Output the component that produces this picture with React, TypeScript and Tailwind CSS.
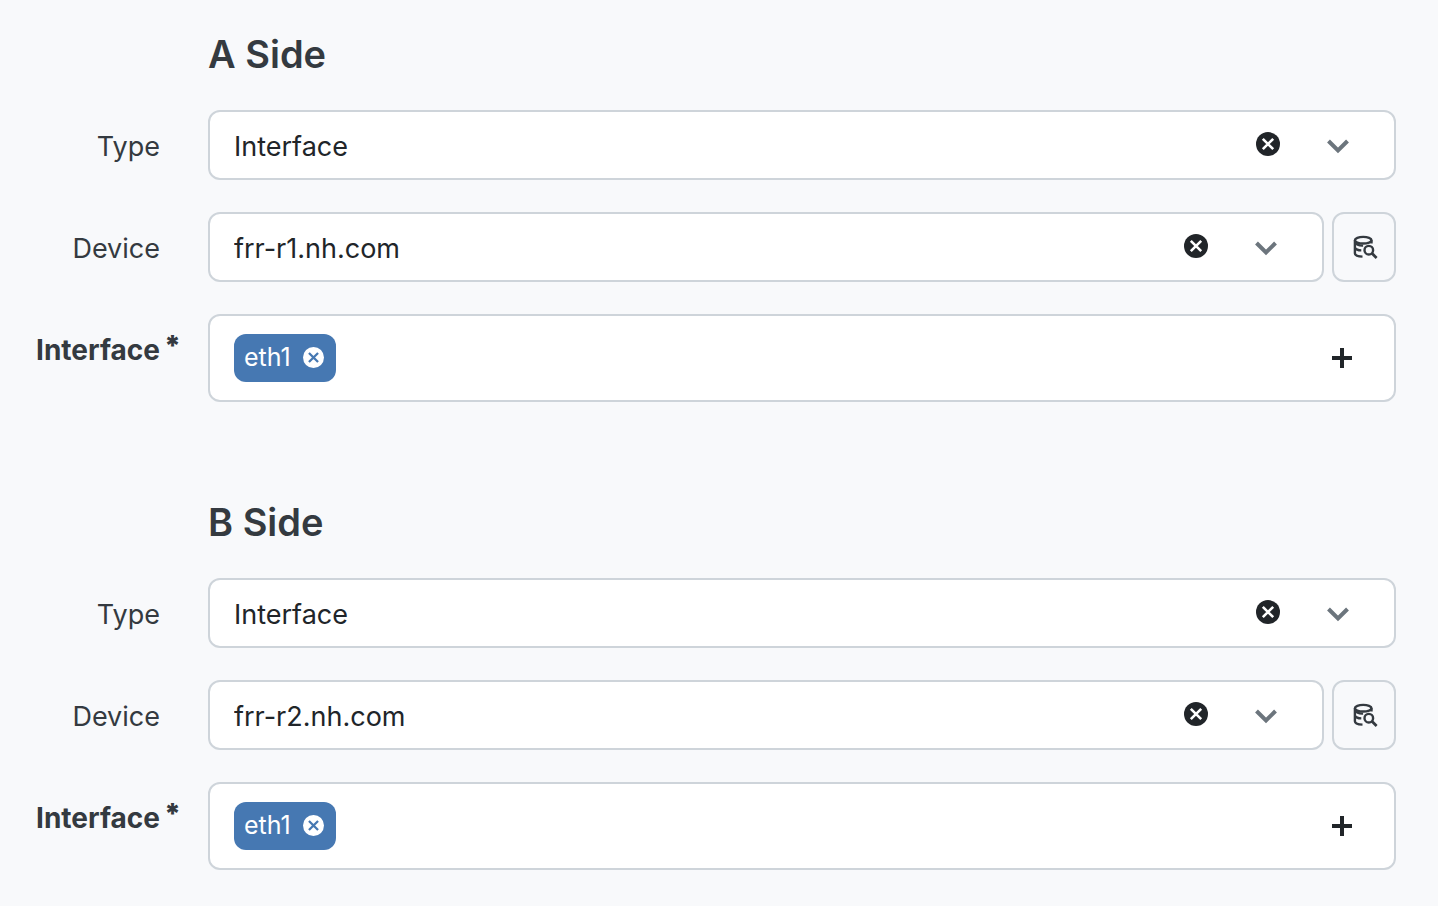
import React, { useState } from "react";

function ClearIcon({ className }: { className: string }) {
  return (
    <svg viewBox="0 0 24 24" className={className} aria-hidden="true">
      <circle cx="12" cy="12" r="12" fill="currentColor" />
      <path d="M6.800 6.800 17.200 17.200M17.200 6.800 6.800 17.200" fill="none" stroke="var(--cross)" strokeWidth="2.600" />
    </svg>
  );
}

function ChevronIcon() {
  return (
    <svg viewBox="0 0 24 24" className="size-6" aria-hidden="true">
      <path d="M2.500 8 12 17.500 21.500 8" fill="none" stroke="currentColor" strokeWidth="4" />
    </svg>
  );
}

function PlusIcon() {
  return (
    <svg viewBox="0 0 20 20" className="size-5" aria-hidden="true">
      <path d="M0 8h8V0h4v8h8v4h-8v8H8v-8H0z" fill="currentColor" />
    </svg>
  );
}

function DatabaseSearchIcon() {
  return (
    <svg viewBox="0 0 28 28" className="size-7" fill="none" stroke="currentColor" strokeWidth="2.400" aria-hidden="true">
      <ellipse cx="13.200" cy="7.200" rx="8.300" ry="3.300" />
      <path d="M4.900 7.200v13c0 1.900 3 3.200 7.600 3.400M4.900 14.600c.9 1.700 3.300 2.700 6.400 2.800M4.900 9.200c1.600 2.600 4.600 3.600 8.200 3.400M21.500 7.200v3.200" />
      <circle cx="18.800" cy="17.200" r="4.300" />
      <path d="m21.900 20.300 4.700 4.700" strokeWidth="2.800" />
    </svg>
  );
}

function Row({ id, label, required, children }: { id: string; label: string; required?: boolean; children: React.ReactNode }) {
  return (
    <div className="grid grid-cols-[160px_minmax(0,1fr)] gap-12">
      <label
        htmlFor={id}
        className={
          required
            ? "relative justify-self-end pt-4 text-[28px] leading-10 font-bold"
            : "relative justify-self-end pt-[17px] text-[27px] leading-10"
        }
      >
        {label}
        {required && <span className="absolute top-3 left-full pl-1 font-black">*</span>}
      </label>
      {children}
    </div>
  );
}

function SelectBox({ id, initial }: { id: string; initial: string }) {
  const [value, setValue] = useState(initial);
  return (
    <div className="flex h-[70px] min-w-0 flex-1 items-center rounded-xl border-2 border-[#ced4da] bg-white pr-11 text-[#212529]">
      <select
        id={id}
        value={value}
        onChange={(event) => setValue(event.target.value)}
        className="h-full min-w-0 flex-1 appearance-none bg-transparent pt-1 pl-6 text-[27px] leading-10 outline-none"
      >
        <option value="" />
        <option value={initial}>{initial}</option>
      </select>
      <button type="button" aria-label="Clear" onClick={() => setValue("")} className="mb-0.5 [--cross:#ffffff]">
        <ClearIcon className="size-6" />
      </button>
      <span className="pointer-events-none ml-[46px] text-[#6c757d]">
        <ChevronIcon />
      </span>
    </div>
  );
}

function Side({ side, device }: { side: string; device: string }) {
  const [chips, setChips] = useState(["eth1"]);
  const key = side.toLowerCase();
  return (
    <section className="flex flex-col gap-8">
      <div className="grid grid-cols-[160px_minmax(0,1fr)] gap-12">
        <h2 className="col-start-2 text-[38px] leading-12 font-semibold">{side} Side</h2>
      </div>
      <Row id={`${key}-type`} label="Type">
        <SelectBox id={`${key}-type`} initial="Interface" />
      </Row>
      <Row id={`${key}-device`} label="Device">
        <div className="flex gap-2">
          <SelectBox id={`${key}-device`} initial={device} />
          <button
            type="button"
            aria-label="Search devices"
            className="flex w-16 items-center justify-center rounded-xl border-2 border-[#ced4da]"
          >
            <DatabaseSearchIcon />
          </button>
        </div>
      </Row>
      <Row id={`${key}-interface`} label="Interface" required>
        <div className="flex h-[88px] items-center gap-2 rounded-xl border-2 border-[#ced4da] bg-white pr-[42px] pl-6 text-[#212529]">
          {chips.map((chip) => (
            <span key={chip} className="flex h-12 items-center gap-3 rounded-xl bg-[#4678b2] pr-3 pl-[10px] text-[25px] text-white">
              {chip}
              <button
                type="button"
                aria-label={`Remove ${chip}`}
                onClick={() => setChips(chips.filter((item) => item !== chip))}
                className="mb-0.5 [--cross:#4678b2]"
              >
                <ClearIcon className="size-[21px]" />
              </button>
            </span>
          ))}
          <input id={`${key}-interface`} type="text" required className="h-full min-w-0 flex-1 bg-transparent text-[27px] outline-none" />
          <button type="button" aria-label="Add interface">
            <PlusIcon />
          </button>
        </div>
      </Row>
    </section>
  );
}

export default function App() {
  return (
    <main className="flex min-h-screen flex-col gap-24 bg-[#f8f9fb] pt-[30px] pr-[42px] pb-9 font-['Inter',sans-serif] text-[#343a40]">
      <Side side="A" device="frr-r1.nh.com" />
      <Side side="B" device="frr-r2.nh.com" />
    </main>
  );
}
